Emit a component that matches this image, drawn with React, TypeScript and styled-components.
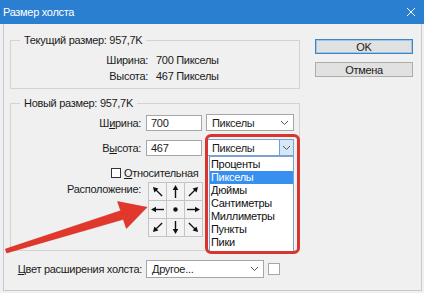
import React from "react";
import styled, { createGlobalStyle } from "styled-components";

const GlobalStyle = createGlobalStyle`
  html, body {
    margin: 0;
    padding: 0;
    background: #f0f0f0;
  }
  body {
    font-family: "Liberation Sans", Arial, sans-serif;
    font-size: 11px;
    letter-spacing: -0.3px;
    color: #1b1b1b;
  }
`;

const units = ["Проценты", "Пикселы", "Дюймы", "Сантиметры", "Миллиметры", "Пункты", "Пики"];

// anchor directions, clockwise angle from "up"; null = centre dot
const anchors: (number | null)[] = [-45, 0, 45, -90, null, 90, -135, 180, 135];

const Chevron = () => (
  <svg width="9" height="6" viewBox="0 0 9 6">
    <path d="M1 1 L4.5 4.5 L8 1" fill="none" stroke="#555" strokeWidth="1" />
  </svg>
);

const AnchorArrow = ({ angle }: { angle: number | null }) => (
  <svg width="17" height="17" viewBox="0 0 17 17">
    {angle === null ? (
      <circle cx="8.5" cy="8.5" r="2.2" fill="#111" />
    ) : (
      <g transform={`rotate(${angle} 8.5 8.5)`}>
        <line x1="8.5" y1="15" x2="8.5" y2="5.5" stroke="#111" strokeWidth="1.4" />
        <polygon points="8.5,2 5.7,7 11.3,7" fill="#111" />
      </g>
    )}
  </svg>
);

const App = () => {
  return (
    <>
      <GlobalStyle />
      <Window>
        <TitleBar>
          <span>Размер холста</span>
          <svg width="10" height="10" viewBox="0 0 10 10">
            <path d="M1 1 L9 9 M9 1 L1 9" stroke="#fff" strokeWidth="1" />
          </svg>
        </TitleBar>
        <Body>
          <LeftColumn>
            <Group>
              <Legend>Текущий размер: 957,7K</Legend>
              <InfoGrid>
                <span>Ширина:</span>
                <span>700 Пикселы</span>
                <span>Высота:</span>
                <span>467 Пикселы</span>
              </InfoGrid>
            </Group>

            <Group $spaced>
              <Legend>Новый размер: 957,7K</Legend>
              <FormRow>
                <Label>
                  Ш<u>и</u>рина:
                </Label>
                <TextBox>700</TextBox>
                <Select $width={88}>
                  <span>Пикселы</span>
                  <Chevron />
                </Select>
              </FormRow>
              <FormRow $gap={8}>
                <Label>
                  В<u>ы</u>сота:
                </Label>
                <TextBox>467</TextBox>
                <OpenCombo>
                  <Select $width={88}>
                    <span>Пикселы</span>
                    <DropButton>
                      <Chevron />
                    </DropButton>
                  </Select>
                  <DropList>
                    {units.map((u) => (
                      <DropItem key={u} $active={u === "Пикселы"}>
                        {u}
                      </DropItem>
                    ))}
                  </DropList>
                  <RedFrame />
                </OpenCombo>
              </FormRow>
              <CheckRow>
                <CheckBox />
                <span>
                  <u>О</u>тносительная
                </span>
              </CheckRow>
              <PlacementRow>
                <Label $top>Расположение:</Label>
                <AnchorGrid>
                  {anchors.map((a, i) => (
                    <AnchorCell key={i}>
                      <AnchorArrow angle={a} />
                    </AnchorCell>
                  ))}
                </AnchorGrid>
              </PlacementRow>
            </Group>

            <ColorRow>
              <ColorLabel>
                <u>Ц</u>вет расширения холста:
              </ColorLabel>
              <Select $width={118} $height={18}>
                <span>Другое...</span>
                <Chevron />
              </Select>
              <Swatch />
            </ColorRow>
          </LeftColumn>

          <RightColumn>
            <Button $default>OK</Button>
            <Button>Отмена</Button>
          </RightColumn>

          <PointerArrow viewBox="4 24 160 240" width="160" height="240">
            <polygon
              points="5.4,249.1 120.7,210.7 117.6,201.6 147,207.3 126.4,228.4 123.3,219.3 6.6,252.9"
              fill="#e2382c"
              stroke="#c92a22"
              strokeWidth="0.6"
              strokeLinejoin="round"
            />
          </PointerArrow>
        </Body>
      </Window>
    </>
  );
};

const Window = styled.div`
  width: 424px;
  height: 293px;
  display: flex;
  flex-direction: column;
  background: #f0f0f0;
  overflow: hidden;
`;

const TitleBar = styled.div`
  height: 24px;
  flex: none;
  display: flex;
  align-items: center;
  justify-content: space-between;
  padding: 0 8px 0 3px;
  background: #2b7fd0;
  color: #fff;
  font-size: 11px;
`;

const Body = styled.div`
  flex: 1;
  position: relative;
  display: flex;
  margin: 0 2px 2px 3px;
  border: 1px solid #c3ccd6;
  border-top: 0;
`;

const LeftColumn = styled.div`
  width: 290px;
  margin-left: 6px;
  padding-top: 10px;
  display: flex;
  flex-direction: column;
`;

const RightColumn = styled.div`
  margin-left: 15px;
  padding-top: 15px;
  display: flex;
  flex-direction: column;
  gap: 8px;
`;

const Group = styled.fieldset<{ $spaced?: boolean }>`
  margin: ${(p) => (p.$spaced ? "8px" : "0")} 0 0 0;
  padding: 0 0 ${(p) => (p.$spaced ? "13px" : "4px")} 0;
  border: 1px solid #d3d3d3;
  min-width: 0;
`;

const Legend = styled.legend`
  margin-left: 9px;
  padding: 0 4px;
  line-height: 13px;
`;

const InfoGrid = styled.div`
  display: grid;
  grid-template-columns: 137px auto;
  column-gap: 8px;
  grid-auto-rows: 16px;
  align-items: center;
  padding-top: 5px;

  & > span:nth-child(odd) {
    text-align: right;
  }
`;

const FormRow = styled.div<{ $gap?: number }>`
  display: flex;
  align-items: center;
  height: 17px;
  margin-top: ${(p) => p.$gap ?? 4}px;
`;

const Label = styled.span<{ $top?: boolean }>`
  width: 130px;
  margin-right: ${(p) => (p.$top ? 7 : 5)}px;
  text-align: right;
  align-self: ${(p) => (p.$top ? "flex-start" : "center")};
  line-height: 14px;
`;

const TextBox = styled.div`
  box-sizing: border-box;
  width: 56px;
  height: 16px;
  margin-right: 4px;
  padding-left: 4px;
  display: flex;
  align-items: center;
  background: #fff;
  border: 1px solid #a6a6a6;
`;

const Select = styled.div<{ $width: number; $height?: number }>`
  box-sizing: border-box;
  width: ${(p) => p.$width}px;
  height: ${(p) => p.$height ?? 17}px;
  display: flex;
  align-items: center;
  justify-content: space-between;
  padding: 0 4px 0 5px;
  background: #fff;
  border: 1px solid #a6a6a6;
`;

const OpenCombo = styled.div`
  position: relative;
  & > ${Select} {
    padding-right: 0;
    border-color: #7da2ce;
  }
`;

const DropButton = styled.div`
  align-self: stretch;
  width: 13px;
  display: flex;
  align-items: center;
  justify-content: center;
  background: #d5e8f8;
  border-left: 1px solid #6aa3dc;
`;

const DropList = styled.div`
  position: absolute;
  top: 17px;
  left: 3px;
  width: 85px;
  box-sizing: border-box;
  padding: 1px 0 2px;
  background: #fff;
  border: 1px solid #7da2ce;
  z-index: 2;
`;

const DropItem = styled.div<{ $active?: boolean }>`
  height: 13px;
  line-height: 13px;
  padding-left: 1px;
  font-size: 11px;
  background: ${(p) => (p.$active ? "#3790f0" : "transparent")};
  color: ${(p) => (p.$active ? "#fff" : "#111")};
`;

const RedFrame = styled.div`
  position: absolute;
  left: -1px;
  top: -5px;
  width: 95px;
  height: 120px;
  box-sizing: border-box;
  border: 3px solid #d8352f;
  border-radius: 6px;
  z-index: 3;
  pointer-events: none;
`;

const CheckRow = styled.div`
  display: flex;
  align-items: center;
  gap: 3px;
  height: 12px;
  margin-top: 11px;
  padding-left: 100px;
`;

const CheckBox = styled.span`
  box-sizing: border-box;
  width: 10px;
  height: 10px;
  background: #fff;
  border: 1px solid #333;
`;

const PlacementRow = styled.div`
  display: flex;
  margin-top: 3px;
`;

const AnchorGrid = styled.div`
  display: grid;
  grid-template-columns: repeat(3, 17px);
  grid-auto-rows: 17px;
  gap: 1px;
  border: 1px solid #c4c4c4;
  background: #c4c4c4;
`;

const AnchorCell = styled.div`
  background: #f3f3f3;
  display: flex;
  align-items: center;
  justify-content: center;
`;

const ColorRow = styled.div`
  display: flex;
  align-items: center;
  margin-top: 9px;
`;

const ColorLabel = styled.span`
  width: 132px;
  margin-right: 4px;
  text-align: right;
`;

const Swatch = styled.span`
  width: 12px;
  height: 12px;
  margin-left: 4px;
  box-sizing: border-box;
  background: #fff;
  border: 1px solid #a6a6a6;
`;

const Button = styled.div<{ $default?: boolean }>`
  box-sizing: border-box;
  width: 98px;
  height: 15px;
  display: flex;
  align-items: center;
  justify-content: center;
  background: #e1e1e1;
  border: 1px solid ${(p) => (p.$default ? "#3d86c6" : "#adadad")};
  box-shadow: ${(p) => (p.$default ? "inset 0 0 0 1px #9fc6e8" : "none")};
`;

const PointerArrow = styled.svg`
  position: absolute;
  left: 0;
  top: 0;
  z-index: 4;
  pointer-events: none;
`;

export default App;
